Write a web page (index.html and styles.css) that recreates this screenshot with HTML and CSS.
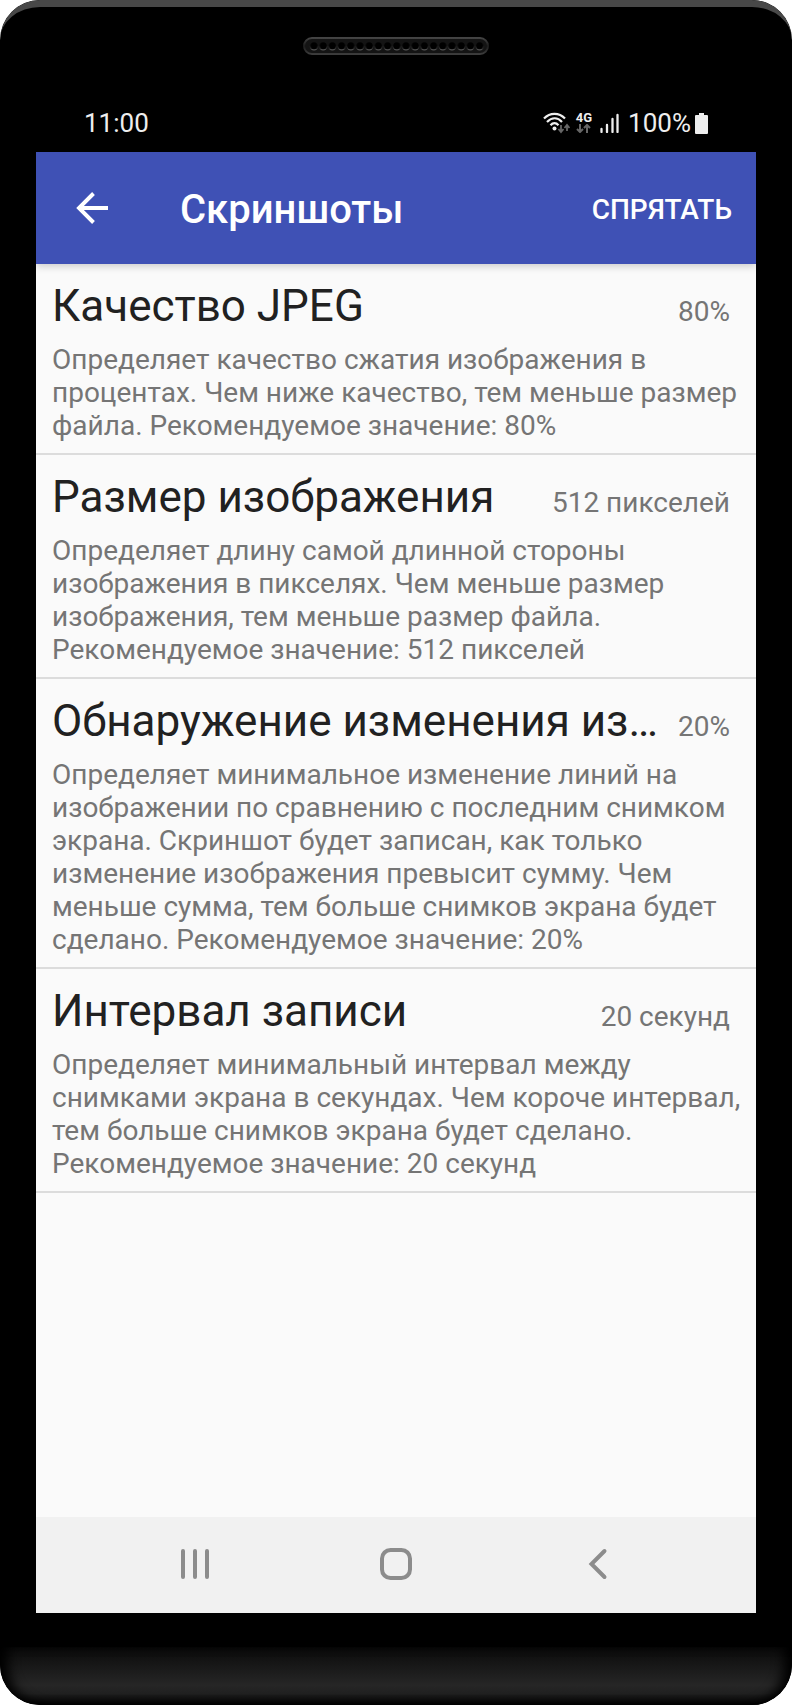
FILE: index.html
```html
<!DOCTYPE html>
<html lang="ru">
<head>
<meta charset="UTF-8">
<meta name="viewport" content="width=device-width, initial-scale=1.0">
<title>Скриншоты</title>
<link rel="stylesheet" href="styles.css">
</head>
<body>

<div class="phone">
    <div class="phone-top">
        <svg class="speaker" width="186" height="18" viewBox="0 0 186 18" aria-hidden="true">
            <defs>
                <linearGradient id="rim" x1="0" y1="0" x2="0" y2="1">
                    <stop offset="0" stop-color="#444"/>
                    <stop offset="0.5" stop-color="#1c1c1c"/>
                    <stop offset="1" stop-color="#3c3c3c"/>
                </linearGradient>
                <linearGradient id="hole" x1="0" y1="0" x2="0" y2="1">
                    <stop offset="0.4" stop-color="#141414"/>
                    <stop offset="1" stop-color="#5c5c5c"/>
                </linearGradient>
                <pattern id="holes" x="6.4" y="4" width="9.2" height="11" patternUnits="userSpaceOnUse">
                    <circle cx="4.6" cy="5.3" r="4.1" fill="url(#hole)"/>
                    <circle cx="4.6" cy="4.8" r="3.5" fill="#000"/>
                </pattern>
            </defs>
            <rect x="1" y="1" width="184" height="16" rx="8" fill="#141414" stroke="url(#rim)" stroke-width="2"/>
            <rect x="6.4" y="4" width="174.8" height="11" fill="url(#holes)"/>
        </svg>
    </div>

    <div class="status-bar">
        <span>11:00</span>
        <div class="status-icons">
            <svg width="27" height="22" viewBox="0 0 27 22" aria-hidden="true">
                <g fill="none" stroke="#eee" stroke-width="2.2">
                    <path d="M1 6.5C7 .2 16 .2 22 6.5"/>
                    <path d="M4 10C9 5 14.500 5 19 10"/>
                    <path d="M7.500 13.300C10 10.500 13 10.500 15.500 13.300"/>
                </g>
                <circle cx="11.500" cy="16.500" r="2" fill="#eee"/>
                <g fill="none" stroke="#666" stroke-width="1.800">
                    <path d="M18 13v7M15.500 17l2.500 3 2.500-3"/>
                    <path d="M24 19v-6M21.500 16l2.500-3 2.500 3"/>
                </g>
            </svg>
            <div class="network">
                <span>4G</span>
                <svg width="15" height="9" viewBox="0 0 15 9" aria-hidden="true">
                    <g fill="none" stroke="#666" stroke-width="2">
                        <path d="M4 0v8M1 5l3 3 3-3"/>
                        <path d="M11 9V1M8 4l3-3 3 3"/>
                    </g>
                </svg>
            </div>
            <svg class="signal" width="19" height="20" viewBox="0 0 19 20" aria-hidden="true">
                <path d="M1.500 16v3M7 12v7M12.500 6v13M17.500 2v17" stroke="#eee" stroke-width="2.300" stroke-linecap="round"/>
            </svg>
            <span>100%</span>
            <svg class="battery" width="13" height="21" viewBox="0 0 13 21" aria-hidden="true">
                <path d="M4 0h5v2h3a1 1 0 0 1 1 1v17a1 1 0 0 1-1 1H1a1 1 0 0 1-1-1V3a1 1 0 0 1 1-1h3z" fill="#eee"/>
            </svg>
        </div>
    </div>

    <div class="screen">
        <header class="app-bar">
            <button class="back-btn" aria-label="Назад">
                <svg width="32" height="32" viewBox="0 0 32 32">
                    <path d="M17.500 1.500L3 16l14.500 14.500M3 16h29" fill="none" stroke="#fff" stroke-width="3.900"/>
                </svg>
            </button>
            <h1>Скриншоты</h1>
            <button class="hide-btn">СПРЯТАТЬ</button>
        </header>

        <main class="settings">
            <section class="setting">
                <div class="setting-head">
                    <h2>Качество JPEG</h2>
                    <span class="value">80%</span>
                </div>
                <p>Определяет качество сжатия изображения в процентах. Чем ниже качество, тем меньше размер файла. Рекомендуемое значение: 80%</p>
            </section>
            <section class="setting">
                <div class="setting-head">
                    <h2>Размер изображения</h2>
                    <span class="value">512 пикселей</span>
                </div>
                <p>Определяет длину самой длинной стороны изображения в пикселях. Чем меньше размер изображения, тем меньше размер файла. Рекомендуемое значение: 512 пикселей</p>
            </section>
            <section class="setting">
                <div class="setting-head">
                    <h2>Обнаружение изменения из…</h2>
                    <span class="value">20%</span>
                </div>
                <p>Определяет минимальное изменение линий на изображении по сравнению с последним снимком экрана. Скриншот будет записан, как только изменение изображения превысит сумму. Чем меньше сумма, тем больше снимков экрана будет сделано. Рекомендуемое значение: 20%</p>
            </section>
            <section class="setting">
                <div class="setting-head">
                    <h2>Интервал записи</h2>
                    <span class="value">20 секунд</span>
                </div>
                <p>Определяет минимальный интервал между снимками экрана в секундах. Чем короче интервал, тем больше снимков экрана будет сделано. Рекомендуемое значение: 20 секунд</p>
            </section>
        </main>

        <nav class="nav-bar">
            <button aria-label="Недавние">
                <svg width="32" height="32" viewBox="0 0 32 32">
                    <path d="M4 3v26M16 3v26M28 3v26" stroke="#8c8c8c" stroke-width="4" stroke-linecap="round"/>
                </svg>
            </button>
            <button aria-label="Домой">
                <svg width="32" height="32" viewBox="0 0 32 32">
                    <rect x="2" y="2" width="28" height="28" rx="8.500" fill="none" stroke="#8c8c8c" stroke-width="4"/>
                </svg>
            </button>
            <button aria-label="Назад">
                <svg width="32" height="32" viewBox="0 0 32 32">
                    <path d="M23.500 3L10.500 16l13 13" fill="none" stroke="#8c8c8c" stroke-width="4" stroke-linecap="round"/>
                </svg>
            </button>
        </nav>
    </div>

    <div class="phone-bottom"></div>
</div>

</body>
</html>
```

FILE: styles.css
```css
* {
    box-sizing: border-box;
}

body {
    margin: 0;
    background-color: #fff;
    font-family: Roboto, "Noto Sans", sans-serif;
}

h1, h2, p {
    margin: 0;
    font-weight: 400;
}

button {
    padding: 0;
    border: none;
    background: none;
    font-family: inherit;
    cursor: pointer;
}

svg {
    display: block;
    flex-shrink: 0;
}

.phone {
    display: flex;
    flex-direction: column;
    min-height: 100vh;
    background-color: #000;
    border-radius: 40px;
    overflow: hidden;
}

.phone-top {
    display: flex;
    justify-content: center;
    height: 94px;
    padding-top: 30px;
    border-top: 7px solid #484848;
    border-radius: 40px 40px 0 0;
}

.status-bar {
    display: flex;
    justify-content: space-between;
    align-items: center;
    height: 58px;
    padding: 0 84px;
    color: #eee;
    font-size: 26px;
    line-height: 32px;
}

.status-icons {
    display: flex;
    align-items: center;
}

.network {
    display: flex;
    flex-direction: column;
    align-items: center;
    margin: 0 8px 0 6px;
    padding-bottom: 2px;
    font-size: 13px;
    font-weight: 700;
    line-height: 13px;
}

.signal {
    margin-right: 9px;
}

.battery {
    margin-left: 4px;
}

.screen {
    flex: 1;
    display: flex;
    flex-direction: column;
    margin: 0 36px;
    background-color: #fafafa;
}

.app-bar {
    display: flex;
    align-items: center;
    height: 112px;
    padding: 0 24px 0 40px;
    background-color: #3f51b5;
    color: #fff;
    box-shadow: 0 2px 8px rgba(0, 0, 0, 0.2);
    clip-path: inset(0 0 -12px 0);
}

.app-bar h1 {
    flex: 1;
    margin-left: 72px;
    padding-top: 4px;
    font-size: 40px;
    font-weight: 500;
    line-height: 48px;
}

.hide-btn {
    padding-top: 4px;
    color: #fff;
    font-size: 28px;
    font-weight: 500;
    line-height: 32px;
}

.settings {
    flex: 1;
}

.setting {
    padding: 16px 12px 11px 16px;
    border-bottom: 2px solid #dcdcdc;
    color: #757575;
    font-size: 28px;
    line-height: 33px;
}

.setting-head {
    display: flex;
    align-items: baseline;
    justify-content: space-between;
    gap: 20px;
    margin: 0 14px 10px 0;
}

.setting-head h2 {
    overflow: hidden;
    color: #212121;
    font-size: 44px;
    line-height: 53px;
    text-overflow: ellipsis;
    white-space: nowrap;
}

.value {
    flex-shrink: 0;
}

.nav-bar {
    display: flex;
    justify-content: center;
    align-items: center;
    gap: 169px;
    height: 96px;
    padding-bottom: 2px;
    background-color: #f1f1f1;
}

.phone-bottom {
    height: 92px;
    border-top: 34px solid #000;
    border-radius: 0 0 40px 40px;
    background: linear-gradient(#0a0a0a, #262626 66%, #202020 80%, #000);
    box-shadow: inset 12px 0 12px -4px #000, inset -12px 0 12px -4px #000;
}
```
